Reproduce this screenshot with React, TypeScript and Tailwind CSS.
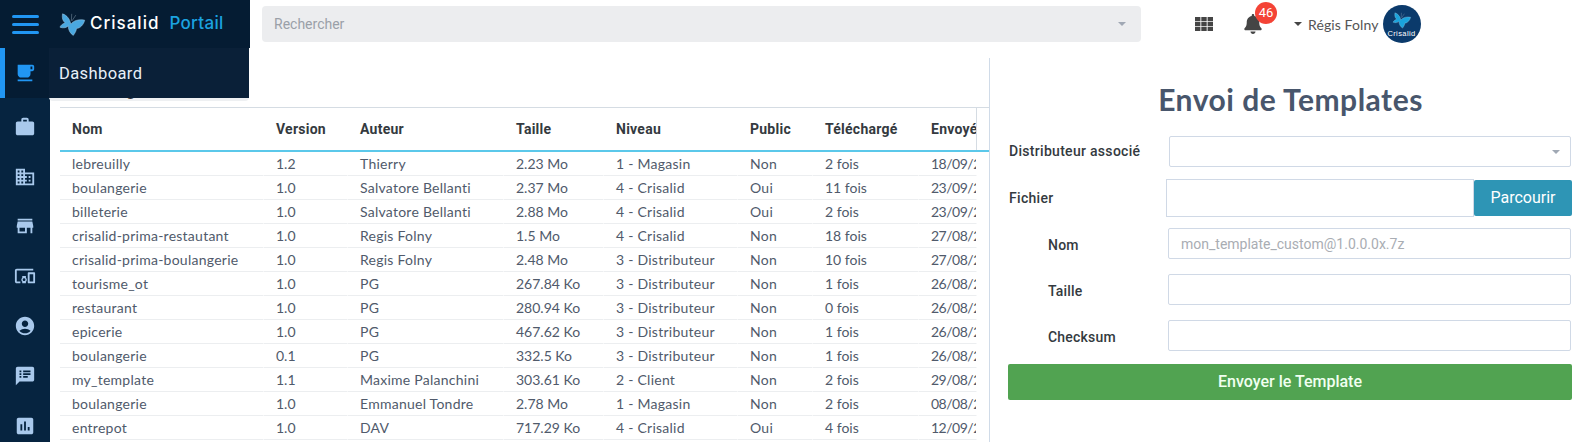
import React from 'react';
import { FaBell } from 'react-icons/fa';
import {
  MdAccountCircle,
  MdAssessment,
  MdDevicesOther,
  MdDomain,
  MdLocalCafe,
  MdSpeakerNotes,
  MdStore,
  MdWork,
} from 'react-icons/md';

const rows = [
  ['lebreuilly', '1.2', 'Thierry', '2.23 Mo', '1 - Magasin', 'Non', '2 fois', '18/09/2'],
  ['boulangerie', '1.0', 'Salvatore Bellanti', '2.37 Mo', '4 - Crisalid', 'Oui', '11 fois', '23/09/2'],
  ['billeterie', '1.0', 'Salvatore Bellanti', '2.88 Mo', '4 - Crisalid', 'Oui', '2 fois', '23/09/2'],
  ['crisalid-prima-restautant', '1.0', 'Regis Folny', '1.5 Mo', '4 - Crisalid', 'Non', '18 fois', '27/08/2'],
  ['crisalid-prima-boulangerie', '1.0', 'Regis Folny', '2.48 Mo', '3 - Distributeur', 'Non', '10 fois', '27/08/2'],
  ['tourisme_ot', '1.0', 'PG', '267.84 Ko', '3 - Distributeur', 'Non', '1 fois', '26/08/2'],
  ['restaurant', '1.0', 'PG', '280.94 Ko', '3 - Distributeur', 'Non', '0 fois', '26/08/2'],
  ['epicerie', '1.0', 'PG', '467.62 Ko', '3 - Distributeur', 'Non', '1 fois', '26/08/2'],
  ['boulangerie', '0.1', 'PG', '332.5 Ko', '3 - Distributeur', 'Non', '1 fois', '26/08/2'],
  ['my_template', '1.1', 'Maxime Palanchini', '303.61 Ko', '2 - Client', 'Non', '2 fois', '29/08/2'],
  ['boulangerie', '1.0', 'Emmanuel Tondre', '2.78 Mo', '1 - Magasin', 'Non', '2 fois', '08/08/2'],
  ['entrepot', '1.0', 'DAV', '717.29 Ko', '4 - Crisalid', 'Oui', '4 fois', '12/09/2'],
];

const headers = ['Nom', 'Version', 'Auteur', 'Taille', 'Niveau', 'Public', 'Téléchargé', 'Envoyé'];
const colWidths = [204, 84, 156, 100, 134, 75, 106, 58];

const numericCols = [1, 3, 6];

const sideIcons = [MdWork, MdDomain, MdStore, MdDevicesOther, MdAccountCircle, MdSpeakerNotes, MdAssessment];

const Butterfly = ({ className }: { className: string }) => (
  <svg viewBox="25 30 85 80" className={className}>
    <path
      d="M62 70 C60 56 50 42 36 38 C34 50 36 60 44 66 C36 70 30 74 28 80 C38 84 48 82 54 76 C54 88 60 100 70 106 C76 98 80 90 80 84 C92 84 102 72 106 58 C90 54 72 58 62 70 Z"
      fill="currentColor"
      stroke="#a9cfe8"
      strokeWidth={1.5}
    />
    <path d="M64 60 L65 38 M66 60 L78 42" stroke="#8fa3b5" strokeWidth={1.5} fill="none" />
  </svg>
);

const Caret = ({ className }: { className: string }) => (
  <span className={`h-0 w-0 border-x-4 border-t-[4px] border-x-transparent ${className}`} />
);

const GridIcon = () => (
  <svg viewBox="0 0 18 14" className="ml-[54px] h-[14px] w-[18px] text-[#454545]" fill="currentColor">
    {[0, 6.3, 12.6].map((x) =>
      [0, 4.9, 9.8].map((y) => <rect key={`${x}-${y}`} x={x} y={y} width={5.4} height={4.2} />)
    )}
  </svg>
);

const Field = ({ label, placeholder }: { label: string; placeholder?: string }) => (
  <div className="flex items-center h-[31px] mb-[15px] pl-[58px] pr-[25px]">
    <label className="w-[120px] pt-[3px] text-[14px] font-medium tracking-[0.2px] text-[#343a40]">{label}</label>
    <input
      readOnly
      placeholder={placeholder}
      className="flex-1 h-full rounded-[2px] border border-[#d0d9e6] bg-white px-3 text-[14px] text-[#444] placeholder:text-[#a9adb3] font-['Roboto',sans-serif]"
    />
  </div>
);

export default function App(): React.ReactElement {
  return (
    <div className="relative flex flex-col w-[1596px] h-[442px] overflow-hidden bg-white font-['Roboto',sans-serif]">
      <header className="flex h-[48px] shrink-0 items-center">
        <div className="flex items-center h-full w-[250px] bg-[#051c33]">
          <div className="w-[50px] flex flex-col items-center gap-[5px] pl-[1px]">
            <span className="block h-[3px] w-[27px] rounded-sm bg-[#2196f3]" />
            <span className="block h-[3px] w-[27px] rounded-sm bg-[#2196f3]" />
            <span className="block h-[3px] w-[27px] rounded-sm bg-[#2196f3]" />
          </div>
          <Butterfly className="ml-[9px] w-[27px] h-[26px] text-[#4aa8e0]" />
          <span className="ml-[4px] text-[17px] font-medium tracking-[1px] text-white font-['Inter',sans-serif]">
            Crisalid<span className="ml-[10px] tracking-[0.3px] text-[#1ba3e0]">Portail</span>
          </span>
        </div>
        <div className="ml-[12px] flex h-[36px] w-[879px] items-center justify-between rounded bg-[#ecedef] pl-[12px] pr-[15px]">
          <span className="text-[14px] text-[#9aa0a8]">Rechercher</span>
          <Caret className="border-t-[#a0a8b4]" />
        </div>
        <GridIcon />
        <div className="relative ml-[31px] h-[20px] w-[18px]">
          <FaBell className="h-[20px] w-[18px] text-[#454545]" />
          <span className="absolute -right-[15px] -top-[12px] flex h-[22px] w-[22px] items-center justify-center rounded-full bg-[#f44336] text-[13px] text-white">
            46
          </span>
        </div>
        <Caret className="ml-[32px] border-t-[#454545]" />
        <span className="ml-[6px] text-[14px] tracking-[0.1px] text-[#555] font-['Lato',sans-serif]">Régis Folny</span>
        <div className="ml-[4px] flex h-[38px] w-[38px] flex-col items-center justify-center rounded-full bg-[#0b3a6b]">
          <Butterfly className="h-[18px] w-[20px] text-[#1aa3dc]" />
          <span className="text-[7.5px] leading-[9px] tracking-[0.4px] text-white font-['Liberation_Sans',sans-serif]">Crisalid</span>
        </div>
      </header>

      <div className="flex flex-1 min-h-0">
        <nav className="w-[50px] shrink-0 overflow-hidden bg-[#062440] flex flex-col">
          <div className="flex h-[50px] shrink-0 mb-[4px] items-center justify-center border-l-[5px] border-[#2196f3] bg-[#051c33] pr-[5px]">
            <MdLocalCafe className="h-[22px] w-[22px] text-[#2196f3]" />
          </div>
          {sideIcons.map((Icon, i) => (
            <div key={i} className="flex h-[49.8px] shrink-0 items-center justify-center">
              <Icon className="h-[22px] w-[22px] text-[#a9c9ec]" />
            </div>
          ))}
        </nav>

        <main className="w-[939px] shrink-0 pl-[10px] overflow-hidden">
          <div className="relative z-10 h-[59px] pl-[20px] pt-[33px] text-[16px] leading-[20px] font-bold text-[#333]">Catalogue</div>
          <div className="w-[929px] border-t border-[#d5dce3] text-[14px] tracking-[0.25px] font-['Lato',sans-serif]">
            <div className="h-[44px] border-b-2 border-[#5bc8ea]">
              <div className="flex h-full w-[917px] items-center overflow-hidden border-r border-[#d5dce3] font-bold text-[#343a40] font-['Roboto',sans-serif]">
                {headers.map((h, i) => (
                  <div key={h} className="shrink-0 pl-[12px] overflow-hidden whitespace-nowrap" style={{ width: colWidths[i] }}>
                    {h}
                  </div>
                ))}
              </div>
            </div>
            <div className="w-[917px] overflow-hidden">
              {rows.map((row, r) => (
                <div key={r} className="flex h-[24px] text-[#505a6b]">
                  {row.map((cell, i) => (
                    <div
                      key={i}
                      className={`flex shrink-0 items-center pl-[12px] overflow-hidden whitespace-nowrap border-b border-b-[#eceef0] border-r border-r-white ${numericCols.includes(i) ? 'tracking-normal' : ''} ${i === 7 ? 'tracking-[-0.5px]' : ''}`}
                      style={{ width: colWidths[i] }}
                    >
                      {cell}
                    </div>
                  ))}
                </div>
              ))}
            </div>
          </div>
        </main>

        <aside className="flex-1 border-l border-[#d0dbe8] mt-[10px]">
          <h1 className="mt-[22px] mb-[18px] pr-[5px] text-center text-[30px] leading-[38px] font-bold tracking-[0.5px] text-[#48566c] font-['Lato',sans-serif]">
            Envoi de Templates
          </h1>
          <div className="flex items-center h-[31px] mb-[12px] pl-[19px] pr-[25px]">
            <label className="w-[160px] text-[14px] font-medium tracking-[0.3px] text-[#343a40]">Distributeur associé</label>
            <div className="flex flex-1 h-full items-center justify-end rounded-[2px] border border-[#d0d9e6] pr-[10px]">
              <Caret className="border-t-[#a0a8b4]" />
            </div>
          </div>
          <div className="flex items-center h-[38px] mb-[11px] pl-[19px] pr-[24px]">
            <label className="w-[157px] text-[14px] font-medium tracking-[0.3px] text-[#343a40]">Fichier</label>
            <div className="flex-1 h-full border border-[#d0d9e6]" />
            <button className="h-[36px] w-[98px] rounded-[2px] bg-[#2e95b5] text-[16px] text-white">Parcourir</button>
          </div>
          <Field label="Nom" placeholder="mon_template_custom@1.0.0.0x.7z" />
          <Field label="Taille" />
          <Field label="Checksum" />
          <div className="pl-[18px] pr-[24px] -mt-[2px]">
            <button className="h-[36px] w-full rounded-[2px] bg-[#51a351] text-[16px] font-medium text-[#f0fff0]">
              Envoyer le Template
            </button>
          </div>
        </aside>
      </div>

      <div className="absolute left-[49px] top-[96px] h-[5px] w-[200px] rounded-b bg-[#eef0f2]" />
      <div className="absolute z-20 left-[49px] top-[48px] flex h-[50px] w-[200px] items-center bg-[#0a2038] pl-[10px] pt-[2px] text-[16.5px] tracking-[0.4px] text-[#e8f0f8]">
        Dashboard
      </div>
    </div>
  );
}
